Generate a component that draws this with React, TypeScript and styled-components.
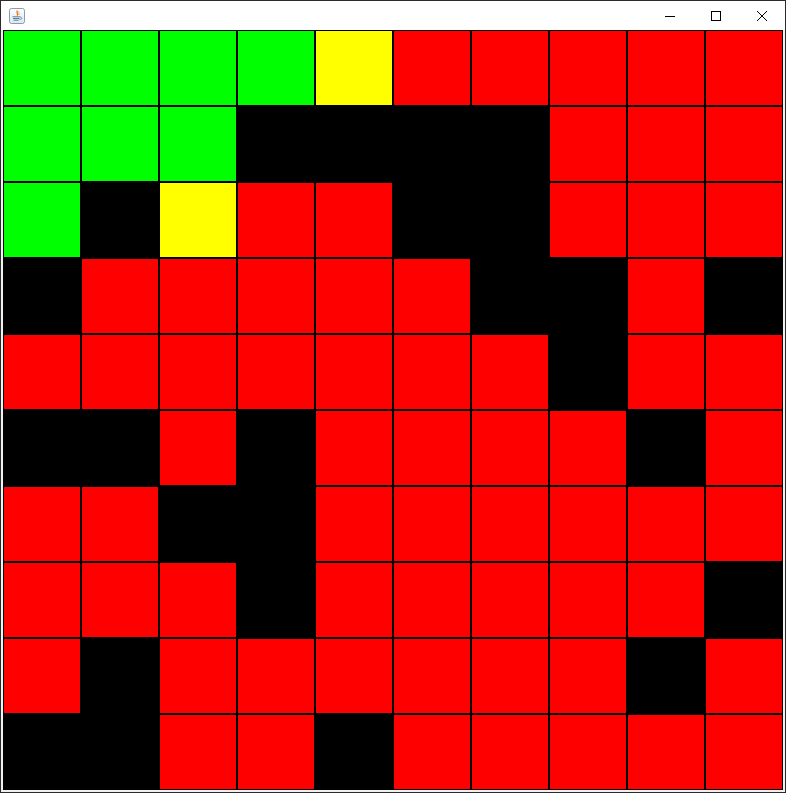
import React from 'react';
import styled, { createGlobalStyle } from 'styled-components';

const GlobalStyle = createGlobalStyle`
  html, body {
    margin: 0;
    padding: 0;
    background: #f0f0f0;
  }
  body {
    font-family: "Segoe UI", "Noto Sans", sans-serif;
  }
`;

type Cell = 'G' | 'Y' | 'R' | 'K';

const board: Cell[][] = [
  ['G', 'G', 'G', 'G', 'Y', 'R', 'R', 'R', 'R', 'R'],
  ['G', 'G', 'G', 'K', 'K', 'K', 'K', 'R', 'R', 'R'],
  ['G', 'K', 'Y', 'R', 'R', 'K', 'K', 'R', 'R', 'R'],
  ['K', 'R', 'R', 'R', 'R', 'R', 'K', 'K', 'R', 'K'],
  ['R', 'R', 'R', 'R', 'R', 'R', 'R', 'K', 'R', 'R'],
  ['K', 'K', 'R', 'K', 'R', 'R', 'R', 'R', 'K', 'R'],
  ['R', 'R', 'K', 'K', 'R', 'R', 'R', 'R', 'R', 'R'],
  ['R', 'R', 'R', 'K', 'R', 'R', 'R', 'R', 'R', 'K'],
  ['R', 'K', 'R', 'R', 'R', 'R', 'R', 'R', 'K', 'R'],
  ['K', 'K', 'R', 'R', 'K', 'R', 'R', 'R', 'R', 'R'],
];

const fills: Record<Cell, string> = {
  G: '#00ff00',
  Y: '#ffff00',
  R: '#ff0000',
  K: '#000000',
};

const Window = styled.div`
  width: 786px;
  height: 793px;
  box-sizing: border-box;
  border: 1px solid #2b2b2b;
  background: #f0f0f0;
  display: flex;
  flex-direction: column;
`;

const TitleBar = styled.div`
  height: 29px;
  background: #ffffff;
  display: flex;
  align-items: center;
  flex-shrink: 0;
`;

const AppIcon = styled.div`
  width: 16px;
  height: 16px;
  margin-left: 8px;
  display: flex;
`;

const Spacer = styled.div`
  flex: 1;
`;

const CaptionButton = styled.div`
  width: 46px;
  height: 29px;
  display: flex;
  align-items: center;
  justify-content: center;
`;

const Content = styled.div`
  padding: 0 2px 2px 2px;
  flex: 1;
`;

const Board = styled.div`
  display: grid;
  grid-template-columns: repeat(10, 78px);
  grid-template-rows: repeat(10, 76px);
`;

const Square = styled.div<{ $fill: string }>`
  box-sizing: border-box;
  border: 1px solid #000;
  background: ${p => p.$fill};
`;

const JavaIcon = () => (
  <svg width="16" height="16" viewBox="0 0 16 16">
    <defs>
      <linearGradient id="jbg" x1="0" y1="0" x2="0" y2="1">
        <stop offset="0" stopColor="#ffffff" />
        <stop offset="1" stopColor="#dfe6ee" />
      </linearGradient>
    </defs>
    <rect x="0.5" y="0.5" width="15" height="15" rx="2" fill="url(#jbg)" stroke="#8a9bb0" />
    <path d="M8.5 2.5 C6.5 4.5 10 5.5 8 7.5" stroke="#e76f00" strokeWidth="1.2" fill="none" />
    <path d="M10 3.5 C9 5 11 5.5 9.6 7" stroke="#f0a050" strokeWidth="0.9" fill="none" />
    <path d="M3.5 8.8 H11 M4 10.5 H10.5 M4.5 12.2 H9.5" stroke="#5382a1" strokeWidth="1" />
    <path d="M11 9 C13.5 9 13.5 11.5 10.5 11.5" stroke="#5382a1" strokeWidth="0.9" fill="none" />
  </svg>
);

const App: React.FC = () => {
  return (
    <>
      <GlobalStyle />
      <Window>
        <TitleBar>
          <AppIcon>
            <JavaIcon />
          </AppIcon>
          <Spacer />
          <CaptionButton>
            <svg width="10" height="10" viewBox="0 0 10 10">
              <line x1="0" y1="5.5" x2="10" y2="5.5" stroke="#000" strokeWidth="1" />
            </svg>
          </CaptionButton>
          <CaptionButton>
            <svg width="10" height="10" viewBox="0 0 10 10">
              <rect x="0.5" y="0.5" width="9" height="9" fill="none" stroke="#000" strokeWidth="1" />
            </svg>
          </CaptionButton>
          <CaptionButton>
            <svg width="10" height="10" viewBox="0 0 10 10">
              <path d="M0 0 L10 10 M10 0 L0 10" stroke="#000" strokeWidth="1" />
            </svg>
          </CaptionButton>
        </TitleBar>
        <Content>
          <Board>
            {board.map((row, r) =>
              row.map((c, i) => <Square key={`${r}-${i}`} $fill={fills[c]} />)
            )}
          </Board>
        </Content>
      </Window>
    </>
  );
};

export default App;
